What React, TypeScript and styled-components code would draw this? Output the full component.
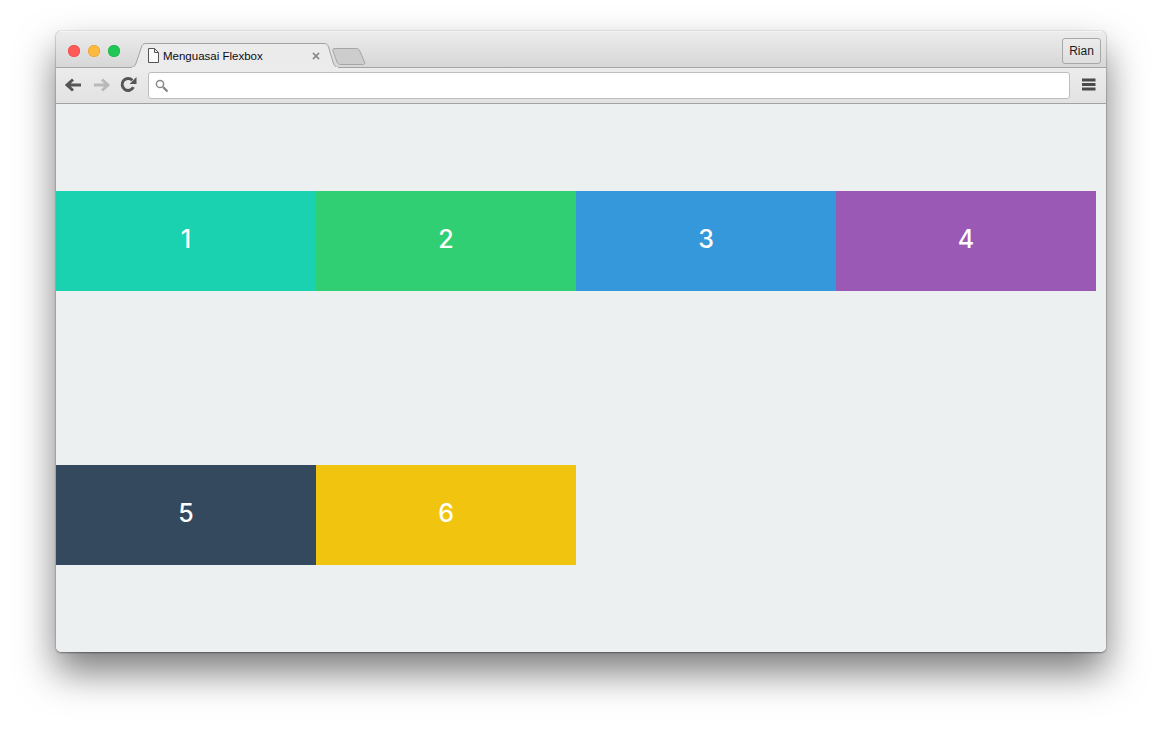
import React from "react";
import styled, { createGlobalStyle } from "styled-components";

const Global = createGlobalStyle`
  html, body { margin: 0; padding: 0; background: #fff; }
  body { overflow: hidden; }
`;

const Stage = styled.div`
  width: 1162px;
  height: 732px;
  box-sizing: border-box;
  padding: 31px 56px 80px;
`;

const Window = styled.div`
  width: 1050px;
  height: 621px;
  display: flex;
  flex-direction: column;
  border-radius: 5px;
  overflow: hidden;
  box-shadow: 0 0 1px rgba(0, 0, 0, 0.6), 0 1px 2px rgba(0, 0, 0, 0.35),
    0 20px 38px rgba(0, 0, 0, 0.52);
`;

const TitleBar = styled.div`
  height: 37px;
  flex: none;
  box-sizing: border-box;
  display: flex;
  align-items: flex-end;
  padding-left: 12px;
  padding-right: 5px;
  background: linear-gradient(#ececec, #d6d6d6);
  border-top: 1px solid #f4f4f4;
  position: relative;
  &::after {
    content: "";
    position: absolute;
    left: 0;
    right: 0;
    bottom: 0;
    height: 1px;
    background: #a4a4a4;
  }
`;

const Lights = styled.div`
  display: flex;
  gap: 8px;
  align-self: flex-start;
  margin-top: 13px;
  margin-right: 11px;
`;

const Light = styled.span<{ $color: string; $edge: string }>`
  width: 12px;
  height: 12px;
  border-radius: 50%;
  background: ${(p) => p.$color};
  box-shadow: inset 0 0 0 0.5px ${(p) => p.$edge};
`;

const Tab = styled.div`
  position: relative;
  z-index: 1;
  width: 204px;
  height: 25px;
  flex: none;
  display: flex;
  align-items: center;
  padding: 0 15px 0 17px;
  box-sizing: border-box;
  margin-right: -3px;
`;

const TabShape = styled.svg`
  position: absolute;
  left: 0;
  top: 0;
  z-index: -1;
`;

const TabTitle = styled.span`
  font: 11.5px "Liberation Sans", Arial, sans-serif;
  color: #0a0a14;
  margin-left: 4px;
  flex: 1;
  white-space: nowrap;
`;

const NewTab = styled.svg`
  align-self: flex-end;
  margin-bottom: 2px;
  flex: none;
  position: relative;
  z-index: 2;
`;

const Spacer = styled.div`
  flex: 1;
`;

const Profile = styled.div`
  align-self: flex-start;
  margin-top: 6px;
  width: 39px;
  height: 26px;
  box-sizing: border-box;
  border: 1px solid #a8a8a8;
  border-radius: 3px;
  background: linear-gradient(#ececec, #dedede);
  display: flex;
  align-items: center;
  justify-content: center;
  font: 12px "Liberation Sans", Arial, sans-serif;
  color: #1a1a1a;
`;

const Toolbar = styled.div`
  height: 36px;
  flex: none;
  box-sizing: border-box;
  display: flex;
  align-items: center;
  padding: 0 10px 0 8px;
  gap: 9px;
  background: linear-gradient(#ececec, #e2e2e2);
  border-bottom: 1px solid #a2a2a2;
`;

const NavIcon = styled.svg`
  flex: none;
  margin-bottom: 2px;
`;

const Omnibox = styled.div`
  flex: 1;
  height: 27px;
  margin-left: 2px;
  margin-right: 3px;
  box-sizing: border-box;
  background: #fff;
  border: 1px solid #bdbdbd;
  border-radius: 3px;
  display: flex;
  align-items: center;
  padding-left: 6px;
`;

const Content = styled.main`
  flex: 1;
  min-height: 0;
  background: #ecf0f1;
  display: flex;
  flex-wrap: wrap;
  align-content: space-around;
`;

const Item = styled.div<{ $color: string }>`
  width: 260px;
  height: 100px;
  background: ${(p) => p.$color};
  color: #fff;
  display: flex;
  align-items: center;
  justify-content: center;
  font: 550 25px Inter, "Open Sans", sans-serif;
  padding-bottom: 4px;
  box-sizing: border-box;
`;

const items = [
  ["1", "#1bd2b0"],
  ["2", "#30cf73"],
  ["3", "#3498db"],
  ["4", "#9b59b6"],
  ["5", "#34495e"],
  ["6", "#f1c40f"],
];

export default function App() {
  return (
    <Stage>
      <Global />
      <Window>
        <TitleBar>
          <Lights>
            <Light $color="#fc5b57" $edge="#e5453f" />
            <Light $color="#fdb83f" $edge="#e09e2e" />
            <Light $color="#1fc855" $edge="#15a944" />
          </Lights>
          <Tab>
            <TabShape width="208" height="26" viewBox="0 0 208 26">
              <path
                d="M0 24.5 C3 24.5 4.5 22 5.5 19 L10.5 4 C11.3 1.6 12.5 .5 15 .5 L193 .5 C195.5 .5 196.7 1.6 197.5 4 L202 19 C203 22 204 24.5 208 24.5 Z"
                fill="#ebebeb"
                stroke="#a2a2a2"
              />
              <rect x="1" y="24" width="206" height="1.5" fill="#ebebeb" />
            </TabShape>
            <svg width="11" height="15" viewBox="0 0 11 15">
              <path d="M.5.5H6.5L10.5 4.5V14.5H.5Z M6.5.5V4.5H10.5" fill="#fbfbfb" stroke="#555" />
            </svg>
            <TabTitle>Menguasai Flexbox</TabTitle>
            <svg width="8" height="8" viewBox="0 0 9 9">
              <path d="M1 1 8 8M8 1 1 8" stroke="#888" strokeWidth="1.8" />
            </svg>
          </Tab>
          <NewTab width="34" height="18" viewBox="0 0 34 18">
            <path
              d="M3 .5H24C26 .5 27 1.2 27.8 3L32.5 14C33.3 16 32.5 16.5 30.5 16.5H9C7 16.5 6 15.8 5 14L1 3C.5 1.2 1.2.5 3 .5Z"
              fill="#cdcdcd"
              stroke="#a6a6a6"
            />
          </NewTab>
          <Spacer />
          <Profile>Rian</Profile>
        </TitleBar>
        <Toolbar>
          <NavIcon width="19" height="16" viewBox="0 0 19 16">
            <path d="M17 8H4M9 2.5 3 8l6 5.5" fill="none" stroke="#555" strokeWidth="3" />
          </NavIcon>
          <NavIcon width="19" height="16" viewBox="0 0 19 16">
            <path d="M2 8H15M10 2.5 16 8l-6 5.5" fill="none" stroke="#b9b9b9" strokeWidth="3" />
          </NavIcon>
          <NavIcon width="17" height="17" viewBox="0 0 16 16">
            <path d="M12.6 10.5A5.6 5.6 0 1 1 11.6 4" fill="none" stroke="#555" strokeWidth="2.8" />
            <path d="M9 7.5H15.5V1Z" fill="#555" />
          </NavIcon>
          <Omnibox>
            <svg width="14" height="14" viewBox="0 0 14 14">
              <circle cx="5" cy="5" r="3.6" fill="none" stroke="#888" strokeWidth="1.5" />
              <path d="M8 8l4.5 4.5" stroke="#888" strokeWidth="2.4" />
            </svg>
          </Omnibox>
          <NavIcon width="14" height="13" viewBox="0 0 14 13">
            <path d="M0 2h13.5M0 6.5h13.5M0 11h13.5" stroke="#4a4a4a" strokeWidth="3" />
          </NavIcon>
        </Toolbar>
        <Content>
          {items.map(([n, c]) => (
            <Item key={n} $color={c}>
              {n}
            </Item>
          ))}
        </Content>
      </Window>
    </Stage>
  );
}
